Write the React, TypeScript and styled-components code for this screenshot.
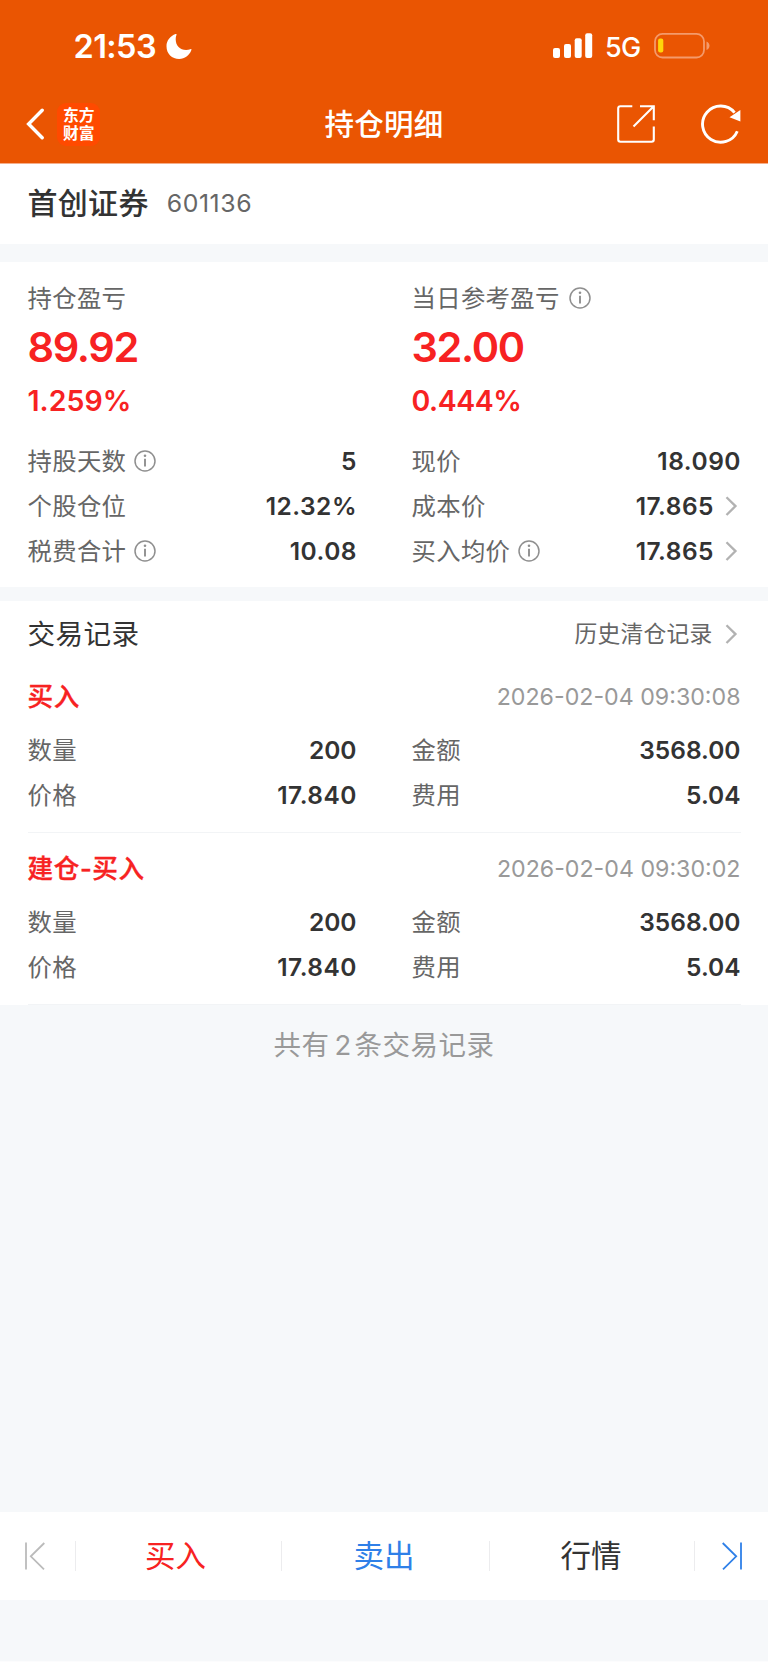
import React from 'react';
import styled, { createGlobalStyle } from 'styled-components';

const GlobalStyle = createGlobalStyle`
  * { box-sizing: border-box; }
  body {
    margin: 0;
    background: #f6f8fa;
    font-family: Inter, "Noto Sans CJK SC", sans-serif;
    color: #333;
  }
  svg { display: block; flex: none; }
`;

const Page = styled.div`
  width: 768px;
  height: 1662px;
  display: flex;
  flex-direction: column;
  overflow: hidden;
  border-bottom: 1px solid #fcfcfd;
`;

const Header = styled.header`
  height: 164px;
  background: #ea5502;
  color: #fff;
  border-bottom: 1px solid #f5ae8a;
`;

const StatusBar = styled.div`
  height: 85px;
  padding: 7px 57px 0 73.5px;
  display: flex;
  align-items: center;
`;

const Time = styled.span`
  font-size: 32.5px;
  font-weight: 600;
  line-height: 40px;
  letter-spacing: -0.6px;
  margin-top: 1px;
  width: 92px;
  white-space: nowrap;
`;

const StatusRight = styled.div`
  margin-left: auto;
  display: flex;
  align-items: center;
`;

const Network = styled.span`
  font-size: 27px;
  font-weight: 500;
  line-height: 34px;
  letter-spacing: -0.6px;
  margin: 3px 0 0 12px;
  width: 49px;
  white-space: nowrap;
`;

const NavBar = styled.nav`
  height: 78px;
  padding: 0 26px;
  display: grid;
  grid-template-columns: 1fr auto 1fr;
  align-items: center;
`;

const NavSide = styled.div<{ $end?: boolean }>`
  display: flex;
  align-items: center;
  justify-content: ${(p) => (p.$end ? 'flex-end' : 'flex-start')};
  gap: ${(p) => (p.$end ? 46 : 12)}px;
`;

const NavTitle = styled.h1`
  margin: 0 0 1px;
  font-size: 29.5px;
  font-weight: 500;
  line-height: 40px;
  letter-spacing: 0.3px;
`;

const Logo = styled.div`
  width: 43px;
  height: 43px;
  padding: 3px 5px 0 5.5px;
  border-radius: 9px;
  background: #ff4a00;
  font-family: "Noto Sans CJK SC", sans-serif;
  font-size: 15.8px;
  font-weight: 700;
  line-height: 18px;
  text-align: center;
  word-break: break-all;
`;

const StockBar = styled.section`
  height: 80px;
  padding: 0 27.5px 3px;
  background: #fff;
  display: flex;
  align-items: center;
`;

const StockName = styled.h2`
  margin: 0;
  font-size: 30px;
  font-weight: 500;
  line-height: 40px;
  letter-spacing: 0.3px;
`;

const StockCode = styled.span`
  margin-left: 18px;
  font-size: 24.8px;
  line-height: 40px;
  letter-spacing: 0.6px;
  color: #666;
`;

const Panel = styled.section<{ $gap: number }>`
  margin-top: ${(p) => p.$gap}px;
  padding: 0 27.5px;
  background: #fff;
`;

const Columns = styled.div`
  display: grid;
  grid-template-columns: 1fr 1fr;
  column-gap: 55px;
`;

const Profit = styled.div`
  padding: 18px 0 17px;
`;

const ProfitAmount = styled.div`
  font-size: 41.5px;
  font-weight: 600;
  line-height: 63px;
  letter-spacing: -1.35px;
  color: #f72222;
`;

const ProfitRate = styled.div<{ $track: number }>`
  font-size: 28.5px;
  font-weight: 600;
  line-height: 43px;
  letter-spacing: ${(p) => p.$track}px;
  color: #f72222;
`;

const Row = styled.div`
  height: 45px;
  padding-bottom: 1.4px;
  display: flex;
  align-items: center;
  justify-content: space-between;
`;

const Label = styled.span<{ $gap?: number }>`
  display: flex;
  align-items: center;
  gap: ${(p) => p.$gap ?? 7.5}px;
  height: 36px;
  font-size: 24.4px;
  line-height: 36px;
  letter-spacing: 0.3px;
  color: #666;
  white-space: nowrap;
`;

const Value = styled.span<{ $track: number }>`
  display: flex;
  align-items: center;
  gap: 8px;
  margin-right: ${(p) => -p.$track}px;
  font-size: 24.5px;
  font-weight: 600;
  line-height: 36px;
  letter-spacing: ${(p) => p.$track}px;
`;

const Summary = styled(Columns)`
  padding-bottom: 13px;
`;

const RecordsHead = styled.div`
  height: 60px;
  padding-top: 5px;
  display: flex;
  align-items: center;
  justify-content: space-between;
`;

const RecordsTitle = styled.h2`
  margin: 0;
  font-size: 27.6px;
  font-weight: 400;
  line-height: 40px;
  letter-spacing: 0.4px;
`;

const HistoryLink = styled.a`
  display: flex;
  align-items: center;
  gap: 9px;
  font-size: 22.8px;
  line-height: 36px;
  letter-spacing: 0.2px;
  color: #666;
`;

const Trade = styled.article`
  padding: 5px 0 14px;
  border-bottom: 1px solid #f2f4f6;
`;

const TradeHead = styled.div`
  height: 62px;
  display: flex;
  align-items: center;
  justify-content: space-between;
`;

const TradeType = styled.span`
  font-size: 25.6px;
  font-weight: 500;
  line-height: 36px;
  letter-spacing: 0.6px;
  color: #f72222;
  -webkit-text-stroke: 0.35px #f72222;
`;

const TradeTime = styled.time`
  font-size: 23.2px;
  line-height: 36px;
  color: #999;
`;

const Total = styled.p`
  margin: 0;
  flex: 1;
  padding-top: 19.5px;
  text-align: center;
  font-size: 27.5px;
  line-height: 40px;
  letter-spacing: 0.5px;
  color: #999;
`;

const Count = styled.span`
  margin: 0 2.5px 0 5px;
`;

const BottomBar = styled.footer`
  height: 88px;
  margin-bottom: 61px;
  background: #fff;
  display: grid;
  grid-template-columns: 75px 206px 208px 205px 74px;
  align-items: center;
`;

const Action = styled.button<{ $color?: string; $shift?: number }>`
  height: 30px;
  padding: 0 ${(p) => p.$shift ?? 0}px 0 0;
  border: 0;
  border-left: 1px solid #ececee;
  background: none;
  display: flex;
  align-items: center;
  justify-content: center;
  font-family: inherit;
  font-size: 30.5px;
  line-height: 30px;
  color: ${(p) => p.$color ?? '#333'};
  &:first-child { border-left: 0; }
`;

const InfoIcon = () => (
  <svg width="22" height="22" viewBox="0 0 22 22" fill="none" stroke="#8f8f8f">
    <circle cx="11" cy="11" r="10" strokeWidth="1.5" />
    <path d="M11 8.7v7.8" strokeWidth="1.9" />
    <circle cx="11" cy="5.7" r="1.3" fill="#8f8f8f" stroke="none" />
  </svg>
);

const Chevron = () => (
  <svg width="19" height="20" viewBox="0 0 19 20" fill="none" stroke="#b2b2b2" strokeWidth="2.3">
    <path d="M4.5 1.2L13.5 10.1L4.5 19" />
  </svg>
);

const MoonIcon = () => (
  <svg width="26" height="27" viewBox="0 0 26 27" fill="#fff">
    <path d="M9.6 1.1C10.2.7 10.8 1 10.5 1.8C9.9 3.4 9.7 4.8 9.7 6.2C9.7 12.6 14 17 20.1 17C21.6 17 23 16.8 24.4 16.2C25.3 15.9 25.7 16.5 25.3 17.3C23.2 22.6 18.9 26 13.2 26C5.9 26 .5 20.7.5 13.2C.5 7.8 4.3 2.9 9.6 1.1Z" />
  </svg>
);

const SignalIcon = () => (
  <svg width="40" height="26" viewBox="0 0 40 26" fill="#fff">
    <rect x="0" y="15" width="7" height="10" rx="2" />
    <rect x="11" y="11" width="7" height="14" rx="2" />
    <rect x="21.7" y="5.3" width="7" height="19.7" rx="2" />
    <rect x="32.2" y="0.2" width="7" height="24.8" rx="2" />
  </svg>
);

const BatteryIcon = () => (
  <svg width="57" height="26" viewBox="0 0 57 26" fill="none">
    <rect x="1" y="0.9" width="49" height="23.6" rx="7.5" stroke="#f49a6b" strokeWidth="1.8" />
    <rect x="4.1" y="5.4" width="5.2" height="14" rx="2" fill="#ffd60a" />
    <path d="M52.5 8.6v8.4c2-.8 3-2.4 3-4.2s-1-3.4-3-4.2z" fill="#f49a6b" />
  </svg>
);

const BackIcon = () => (
  <svg width="19" height="32" viewBox="0 0 19 32" fill="none" stroke="#fff" strokeWidth="3.4" strokeLinecap="round">
    <path d="M16.2 2.2L2.6 16L16.2 29.8" />
  </svg>
);

const ShareIcon = () => (
  <svg width="38" height="38" viewBox="0 0 38 38" fill="none" stroke="#fff" strokeWidth="2.1">
    <path d="M15.3 1.2H3.4Q1.2 1.2 1.2 3.4V34.6Q1.2 36.8 3.4 36.8H34.6Q36.8 36.8 36.8 34.6V21.5" />
    <path d="M23 1.2H36.8V15.3M36.5 1.5L16.5 21.5" />
  </svg>
);

const RefreshIcon = () => (
  <svg width="41" height="40" viewBox="0 0 41 40" fill="none">
    <path d="M36.3 27.2A18.1 18.1 0 1 1 33.6 8.6" stroke="#fff" strokeWidth="2.9" />
    <path d="M39.4 6V17.4L28.5 13.2Z" fill="#fff" />
  </svg>
);

const FirstIcon = () => (
  <svg width="20" height="28" viewBox="0 0 20 28" fill="none" stroke="#bbb" strokeWidth="1.8">
    <path d="M1 .5V27.5M19.3 1L5.8 14.3L19 27.3" />
  </svg>
);

const LastIcon = () => (
  <svg width="20" height="28" viewBox="0 0 20 28" fill="none" stroke="#2f80e8" strokeWidth="1.8">
    <path d="M19 .5V27.5M.7 1L14.2 14.3L1 27.3" />
  </svg>
);

type Field = { label: string; value: string; info?: boolean; link?: boolean };

// The digit 1 is narrow in this face, so numbers that hold it are tracked wider.
const tracking = (value: string) => (value.includes('1') ? 0.5 : 0);

const FieldRow = ({ label, value, info, link }: Field) => (
  <Row>
    <Label>{label}{info && <InfoIcon />}</Label>
    <Value $track={tracking(value)}>{value}{link && <Chevron />}</Value>
  </Row>
);

const profits = [
  { label: '持仓盈亏', amount: '89.92', rate: '1.259%' },
  { label: '当日参考盈亏', amount: '32.00', rate: '0.444%', info: true },
];

const details: Field[] = [
  { label: '持股天数', value: '5', info: true },
  { label: '现价', value: '18.090' },
  { label: '个股仓位', value: '12.32%' },
  { label: '成本价', value: '17.865', link: true },
  { label: '税费合计', value: '10.08', info: true },
  { label: '买入均价', value: '17.865', info: true, link: true },
];

const tradeFields: Field[] = [
  { label: '数量', value: '200' },
  { label: '金额', value: '3568.00' },
  { label: '价格', value: '17.840' },
  { label: '费用', value: '5.04' },
];

const trades = [
  { type: '买入', time: '2026-02-04 09:30:08', fields: tradeFields },
  { type: '建仓-买入', time: '2026-02-04 09:30:02', fields: tradeFields },
];

export default function App() {
  return (
    <Page>
      <GlobalStyle />
      <Header>
        <StatusBar>
          <Time>21:53</Time>
          <MoonIcon />
          <StatusRight>
            <SignalIcon />
            <Network>5G</Network>
            <BatteryIcon />
          </StatusRight>
        </StatusBar>
        <NavBar>
          <NavSide>
            <BackIcon />
            <Logo>东方财富</Logo>
          </NavSide>
          <NavTitle>持仓明细</NavTitle>
          <NavSide $end>
            <ShareIcon />
            <RefreshIcon />
          </NavSide>
        </NavBar>
      </Header>

      <StockBar>
        <StockName>首创证券</StockName>
        <StockCode>601136</StockCode>
      </StockBar>

      <Panel $gap={18}>
        <Columns>
          {profits.map((p) => (
            <Profit key={p.label}>
              <Label $gap={9}>{p.label}{p.info && <InfoIcon />}</Label>
              <ProfitAmount>{p.amount}</ProfitAmount>
              <ProfitRate $track={tracking(p.rate) - 0.45}>{p.rate}</ProfitRate>
            </Profit>
          ))}
        </Columns>
        <Summary>
          {details.map((f) => <FieldRow key={f.label} {...f} />)}
        </Summary>
      </Panel>

      <Panel $gap={14}>
        <RecordsHead>
          <RecordsTitle>交易记录</RecordsTitle>
          <HistoryLink>历史清仓记录<Chevron /></HistoryLink>
        </RecordsHead>
        {trades.map((t) => (
          <Trade key={t.time}>
            <TradeHead>
              <TradeType>{t.type}</TradeType>
              <TradeTime>{t.time}</TradeTime>
            </TradeHead>
            <Columns>
              {t.fields.map((f) => <FieldRow key={f.label} {...f} />)}
            </Columns>
          </Trade>
        ))}
      </Panel>

      <Total>共有<Count>2</Count>条交易记录</Total>

      <BottomBar>
        <Action as="div" $shift={5}><FirstIcon /></Action>
        <Action $color="#f72222" $shift={6}>买入</Action>
        <Action $color="#2f80e8" $shift={3}>卖出</Action>
        <Action $shift={2}>行情</Action>
        <Action><LastIcon /></Action>
      </BottomBar>
    </Page>
  );
}
